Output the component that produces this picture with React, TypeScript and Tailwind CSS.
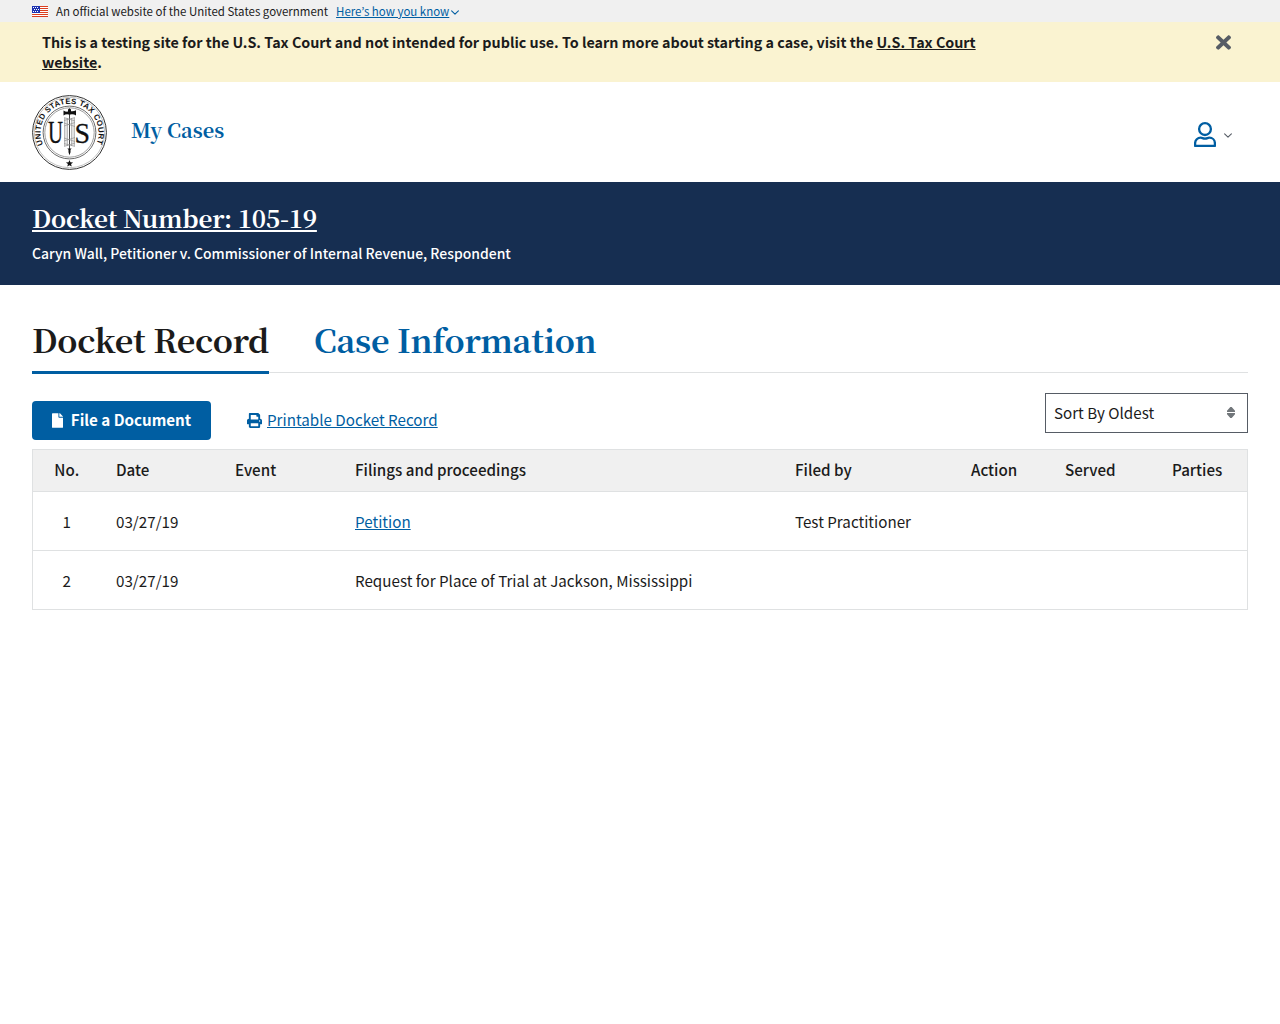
import React from "react";
import { FaTimes, FaFile, FaPrint } from "react-icons/fa";

const columns = [
  { key: "no", label: "No." },
  { key: "date", label: "Date" },
  { key: "event", label: "Event" },
  { key: "filing", label: "Filings and proceedings" },
  { key: "filedBy", label: "Filed by" },
  { key: "action", label: "Action" },
  { key: "served", label: "Served" },
  { key: "parties", label: "Parties" },
];

const entries = [
  { no: 1, date: "03/27/19", filing: "Petition", link: true, filedBy: "Test Practitioner" },
  { no: 2, date: "03/27/19", filing: "Request for Place of Trial at Jackson, Mississippi", link: false, filedBy: "" },
];

function Flag() {
  return (
    <svg width="16" height="11" viewBox="0 0 16 11" shapeRendering="crispEdges">
      <rect width="16" height="11" fill="#fff" />
      {[0, 2, 4, 6, 8, 10].map((y) => (
        <rect key={y} y={y} width="16" height="1" fill="#db3e1f" />
      ))}
      <rect width="8" height="7" fill="#1e33b1" />
      {[1, 3, 5].map((y) =>
        [1, 3, 5].map((x) => (
          <rect key={`${x}-${y}`} x={y === 3 ? x + 1 : x} y={y} width="1" height="1" fill="#fff" />
        )),
      )}
    </svg>
  );
}

function Chevron({ className }: { className: string }) {
  return (
    <svg className={className} viewBox="0 0 8 5" fill="none" stroke="currentColor" strokeWidth="1.1" strokeLinecap="round" strokeLinejoin="round">
      <path d="M.6 .8 4 4.1 7.4 .8" />
    </svg>
  );
}

function Seal() {
  return (
    <svg width="75" height="75" viewBox="0 0 75 75" fill="none" className="shrink-0">
      <circle cx="37.5" cy="37.5" r="36.9" stroke="#333" strokeWidth="1" />
      <circle cx="37.5" cy="37.5" r="35.2" stroke="#999" strokeWidth=".6" />
      <circle cx="37.5" cy="37.5" r="26.4" stroke="#444" strokeWidth=".8" />
      <circle cx="37.5" cy="37.5" r="24.7" stroke="#777" strokeWidth=".7" />
      <path id="seal-arc" d="M11 49.500A29 29 0 1 1 64 49.500" />
      <text fill="#111" fontFamily="Liberation Sans" fontWeight="700" fontSize="7.8">
        <textPath href="#seal-arc" textLength="114" lengthAdjust="spacing">UNITED STATES TAX COURT</textPath>
      </text>
      <text x="16" y="48" fontFamily="Liberation Serif" fontSize="31" fill="#111" stroke="#111" strokeWidth=".3" textLength="15" lengthAdjust="spacingAndGlyphs">U</text>
      <text x="42.400" y="48" fontFamily="Liberation Serif" fontSize="30" fill="#111" stroke="#111" strokeWidth=".3" textLength="15.500" lengthAdjust="spacingAndGlyphs">S</text>
      <rect x="32.4" y="22.5" width="10" height="29" fill="#fff" />
      <path d="M32.8 23v28M35.2 23v28M39.8 23v28M42.2 23v28" stroke="#888" strokeWidth=".8" />
      <path d="M37.5 14v44" stroke="#444" strokeWidth="1" />
      <path d="M32 25.5 43 22.5M32 22.5 43 26M32 31 43 27.500M32 28 43 31.500M32 46 43 42.500M32 43 43 46.500M32 51.500 43 48M32 48.500 43 51.500" stroke="#888" strokeWidth=".6" />
      <path d="M31.500 15.500c1.500 1 3 1.300 4.500 1.100V14.500l1.500-1.300 1.500 1.300v1.800c1.800.2 3.500 0 5-1v5.200c-1.500-1-3.200-1.300-5-1.100h-3c-1.500-.2-3 .1-4.500 1.100z" fill="#111" />
      <path d="M35.300 53.500h4.400l-1.200 1.300v2.400l-1 3-1-3v-2.400z" fill="#111" />
      <path d="m37.500 64.900.95 2.400 2.650.15-2.050 1.650.7 2.500-2.250-1.450-2.250 1.450.7-2.500-2.050-1.650 2.650-.15z" fill="#111" />
    </svg>
  );
}

function UserIcon() {
  return (
    <svg width="22" height="25" viewBox="0 0 22 25" fill="none" stroke="#005ea2" strokeWidth="2.3">
      <circle cx="11" cy="7.1" r="5.9" />
      <path d="M1.1 23.900v-2.600C1.100 18 3.600 15.700 6.800 15.700c1.100 0 2.400.9 4.200.9s3.100-.9 4.200-.9c3.200 0 5.700 2.300 5.700 5.600v2.600z" strokeLinejoin="round" />
    </svg>
  );
}

export default function App() {
  return (
    <div className="min-h-screen bg-white font-['Noto_Sans_CJK_KR',sans-serif] text-[15.18px] text-[#1b1b1b]">
      <section className="flex h-[22px] items-center bg-[#f0f0f0] px-8 text-[11.47px] leading-[14px]">
        <Flag />
        <span className="ml-2">An official website of the United States government</span>
        <a href="#" className="ml-2 flex items-center text-[#005ea2]">
          <span className="underline">Here’s how you know</span>
          <Chevron className="mt-0.5 ml-0.5 h-[5px] w-2" />
        </a>
      </section>

      <section className="flex h-[60px] justify-between bg-[#faf3d1] pt-2.5 pr-[49px] pl-[42px]">
        <p className="w-[960px] text-[14.325px] leading-5 font-bold">
          This is a testing site for the U.S. Tax Court and not intended for public use. To learn more about starting a case, visit the{" "}
          <a href="#" className="underline">U.S. Tax Court website</a>.
        </p>
        <button className="h-4 text-[#565c65]" aria-label="Close">
          <FaTimes className="h-[21px] w-[15px]" preserveAspectRatio="none" />
        </button>
      </section>

      <header className="flex h-[100px] items-center px-8">
        <Seal />
        <a href="#" className="mb-1 ml-6 font-['Noto_Serif_CJK_SC','Liberation_Serif',serif] text-[20px] leading-6 font-bold text-[#005ea2]">
          My Cases
        </a>
        <button className="mt-1 mr-4 ml-auto flex items-center gap-2 text-[#565c65]" aria-label="Account">
          <UserIcon />
          <Chevron className="mt-0.5 h-[5px] w-2" />
        </button>
      </header>

      <section className="h-[103px] bg-[#162e51] px-8 pt-5 text-white">
        <h1 className="font-['Noto_Serif_CJK_SC','Liberation_Serif',serif] text-[24.3px] leading-8 font-bold tracking-[-0.22px]">
          <a href="#" className="underline decoration-2 underline-offset-2">Docket Number: 105-19</a>
        </h1>
        <p className="mt-[9px] text-[13.95px] leading-5 font-medium">Caryn Wall, Petitioner v. Commissioner of Internal Revenue, Respondent</p>
      </section>

      <main className="px-8 pt-8">
        <nav className="flex h-14 gap-[45px] border-b border-[#dfe1e2] font-['Noto_Serif_CJK_SC','Liberation_Serif',serif] text-[32.4px] leading-[44px] font-bold tracking-[-0.3px] whitespace-nowrap">
          <button className="h-[57px] w-[237px] border-b-3 border-[#005ea2] pb-2.5">Docket Record</button>
          <button className="h-[57px] pb-[13px] text-[#005ea2]">Case Information</button>
        </nav>

        <div className="mt-5 flex h-14">
          <button className="mt-2 flex h-[39px] w-[179px] items-center justify-center rounded bg-[#005ea2] font-bold text-white">
            <FaFile className="mr-2 h-[15px] w-[11px]" />
            <span className="pb-0.5">File a Document</span>
          </button>
          <a href="#" className="mt-2 ml-9 flex h-[39px] items-center text-[#005ea2]">
            <FaPrint className="mr-[5px] h-[15px] w-[15px]" />
            <span className="pb-0.5 underline">Printable Docket Record</span>
          </a>
          <div className="ml-auto flex h-10 w-[203px] items-center justify-between border border-[#565c65] pr-3 pl-2">
            <span className="pb-0.5">Sort By Oldest</span>
            <svg width="8" height="11" viewBox="0 0 8 11" fill="#71767a" className="mb-0.5">
              <path d="M3.300 0h1.400L8 3.800V5H0V3.800zM3.300 11h1.400L8 7.200V6H0v1.200z" />
            </svg>
          </div>
        </div>

        <table className="w-full table-fixed border-collapse border border-[#dfe1e2] text-left">
          <colgroup>
            <col className="w-[68px]" />
            <col className="w-[119px]" />
            <col className="w-[120px]" />
            <col className="w-[440px]" />
            <col className="w-[176px]" />
            <col className="w-[94px]" />
            <col className="w-[107px]" />
            <col />
          </colgroup>
          <thead>
            <tr className="h-[42px] border-b border-[#dfe1e2] bg-[#f0f0f0]">
              {columns.map((c) => (
                <th key={c.key} className="p-0 pb-0.5 pl-[15.5px] font-medium first:pl-0 first:text-center">{c.label}</th>
              ))}
            </tr>
          </thead>
          <tbody>
            {entries.map((e) => (
              <tr key={e.no} className="h-[59px] border-b border-[#dfe1e2]">
                <td className="p-0 text-center">{e.no}</td>
                <td className="p-0 pl-[15.5px]">{e.date}</td>
                <td />
                <td className="p-0 pl-[15.5px]">
                  {e.link ? <a href="#" className="text-[#005ea2] underline">{e.filing}</a> : e.filing}
                </td>
                <td className="p-0 pl-[15.5px]">{e.filedBy}</td>
                <td />
                <td />
                <td />
              </tr>
            ))}
          </tbody>
        </table>
      </main>
    </div>
  );
}
